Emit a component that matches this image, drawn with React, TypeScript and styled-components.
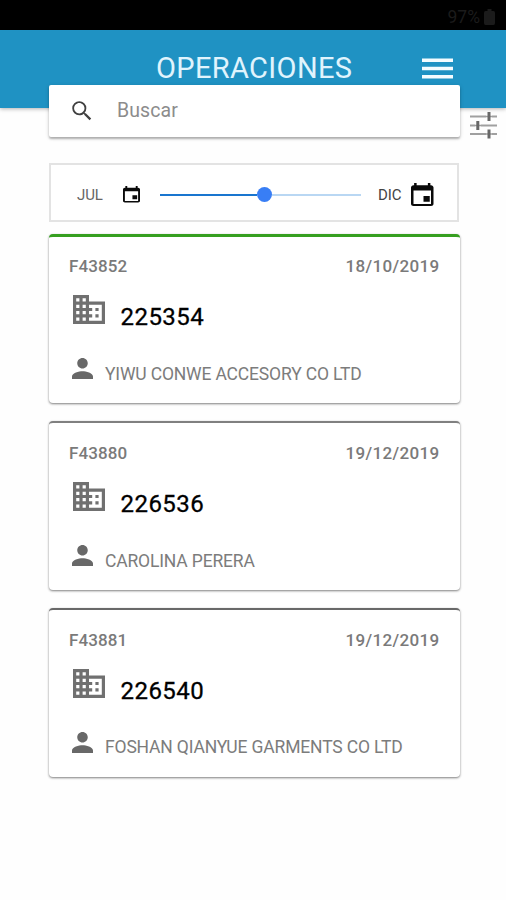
import React from 'react';
import styled, { createGlobalStyle } from 'styled-components';

const GlobalStyle = createGlobalStyle`
  * { box-sizing: border-box; }
  body { margin: 0; background: #fefefe; font-family: Roboto, sans-serif; }
`;

const Screen = styled.div`
  width: 506px;
  height: 900px;
  overflow: hidden;
  background: #fefefe;
`;

const StatusBar = styled.div`
  height: 30px;
  padding: 3px 11px 0 0;
  display: flex;
  justify-content: flex-end;
  align-items: center;
  gap: 4px;
  background: #000;
  color: #1b1b1b;
  font-size: 17.5px;
`;

const Header = styled.header`
  height: 78px;
  padding: 19.5px 53px 0 156px;
  display: flex;
  justify-content: space-between;
  align-items: flex-start;
  background: #1f92c3;
  box-shadow: 0 1px 4px rgba(0, 0, 0, 0.3);
`;

const Title = styled.h1`
  margin: 0;
  font-size: 29px;
  line-height: 36px;
  font-weight: 400;
  letter-spacing: 0.35px;
  color: #e0f4fd;
  white-space: nowrap;
`;

const MenuButton = styled.button`
  margin: 8.5px 0 0;
  padding: 0;
  border: 0;
  background: none;
  line-height: 0;
`;

const SearchRow = styled.div`
  position: relative;
  margin-top: -23px;
  padding-left: 49px;
  display: flex;
  align-items: flex-start;
  height: 52px;
`;

const SearchBox = styled.div`
  width: 410.5px;
  height: 52px;
  padding-left: 20px;
  display: flex;
  align-items: center;
  gap: 22px;
  background: #fff;
  border-radius: 2px;
  box-shadow: 0 2px 2px rgba(0, 0, 0, 0.24), 0 1px 4px rgba(0, 0, 0, 0.16);
`;

const Placeholder = styled.span`
  margin-top: -1px;
  font-size: 19.5px;
  letter-spacing: 0.1px;
  color: #8c8c8c;
`;

const FilterButton = styled.button`
  margin: 27px 0 0 10.5px;
  padding: 0;
  border: 0;
  background: none;
  line-height: 0;
`;

const Content = styled.main`
  width: 410.5px;
  margin: 26px 0 0 49px;
`;

const RangeBox = styled.section`
  width: 410px;
  height: 59px;
  padding: 4px 23px 0 26px;
  display: flex;
  align-items: center;
  border: 2px solid #e3e3e3;
  background: #fff;
`;

const Month = styled.span<{ $width: number; $soft?: boolean }>`
  width: ${(p) => p.$width}px;
  font-size: 15px;
  letter-spacing: -0.1px;
  color: ${(p) => (p.$soft ? '#666' : '#444')};
`;

const Slider = styled.div`
  width: 201px;
  height: 15px;
  margin: 0 17px 0 20px;
  display: flex;
  align-items: center;
`;

const Track = styled.div<{ $active?: boolean }>`
  width: ${(p) => (p.$active ? 97 : 89)}px;
  height: 2px;
  background: ${(p) => (p.$active ? '#1975cf' : '#b9d7f3')};
`;

const Thumb = styled.div`
  width: 15px;
  height: 15px;
  border-radius: 50%;
  background: #387ef5;
`;

const CardList = styled.div`
  margin-top: 12px;
  display: flex;
  flex-direction: column;
  gap: 17.8px;
`;

const Card = styled.article<{ $accent: string; $line: number }>`
  height: 169px;
  padding: ${(p) => 22.4 - p.$line}px 20px 0;
  border-top: ${(p) => p.$line}px solid ${(p) => p.$accent};
  border-radius: 4px;
  background: #fff;
  box-shadow: 0 1px 2px rgba(0, 0, 0, 0.34), 0 1px 3px rgba(0, 0, 0, 0.2);
`;

const CardTop = styled.div`
  height: 20px;
  display: flex;
  justify-content: space-between;
  font-size: 17px;
  line-height: 20px;
  font-weight: 500;
  letter-spacing: 0.1px;
  color: #7a7a7a;
`;

const DateText = styled.time`
  letter-spacing: 0.35px;
`;

const NumberRow = styled.div`
  height: 36px;
  margin: 19px 0 0 3.5px;
  display: flex;
  gap: 16px;
`;

const OperationNumber = styled.span`
  padding-top: 8px;
  font-size: 24px;
  line-height: 28px;
  letter-spacing: 0.45px;
  color: #000;
  -webkit-text-stroke: 0.3px #000;
`;

const ClientRow = styled.div`
  height: 27px;
  margin: 27px 0 0 3px;
  display: flex;
  gap: 12px;
`;

const ClientName = styled.span`
  padding-top: 5.5px;
  font-size: 17.5px;
  line-height: 20px;
  letter-spacing: -0.16px;
  white-space: nowrap;
  color: #7c7c7c;
`;

const Icon = styled.svg`
  display: block;
  flex: none;
`;

const BatteryIcon = () => (
  <Icon width="11" height="16" viewBox="0 0 11 16" fill="#1b1b1b">
    <path d="M3.5 0h4v2H9.5Q11 2 11 4v10q0 2-1.5 2h-8Q0 16 0 14V4q0-2 1.5-2h2z" />
  </Icon>
);

const MenuIcon = () => (
  <Icon width="31" height="21" viewBox="0 0 31 21" fill="#f4fcff">
    <path d="M0 .5h31v3.6H0zM0 8.7h31v3.6H0zM0 16.9h31v3.6H0z" />
  </Icon>
);

const SearchIcon = () => (
  <Icon width="26" height="26" viewBox="0 0 24 24" fill="#404040">
    <path d="M15.5 14h-.79l-.28-.27A6.471 6.471 0 0 0 16 9.5 6.5 6.5 0 1 0 9.5 16c1.61 0 3.09-.59 4.23-1.57l.27.28v.79l5 4.99L20.49 19l-4.99-5zm-6 0.3C7 14.3 4.7 12 4.7 9.5S7 4.7 9.5 4.7 14.3 7 14.3 9.5 12 14.3 9.5 14.3z" />
  </Icon>
);

const TuneIcon = () => (
  <Icon width="27" height="27" viewBox="0 0 27 27">
    <path d="M0 4.5h16M22 4.5h5M0 13.5h5M11 13.5h16M0 22h16M22 22h5" stroke="#a0a0a0" strokeWidth="2" />
    <path d="M16 4.5h6M5 13.5h6M16 22h6" stroke="#a0a0a0" strokeWidth="1.6" />
    <path d="M19 0v9M7.8 9v9M19 17.5v9" stroke="#686868" strokeWidth="3" />
  </Icon>
);

const CalendarIcon = ({ width, height }: { width: number; height: number }) => (
  <Icon width={width} height={height} viewBox="3 1 18 20" preserveAspectRatio="none" fill="#0a0a0a">
    <path d="M18 12.2h-5v5h5zM16.5 1v2h-9V1h-2v2H5c-1.1 0-2 .9-2 2v14c0 1.1.9 2 2 2h14c1.1 0 2-.9 2-2V5c0-1.1-.9-2-2-2h-.5V1zM19 19.2H5V7.5h14z" />
  </Icon>
);

const BuildingIcon = () => (
  <Icon width="32" height="29" viewBox="2 3 20 18" preserveAspectRatio="none" fill="#707070">
    <path d="M12 7V3H2v18h20V7H12zM6 19H4v-2h2v2zm0-4H4v-2h2v2zm0-4H4V9h2v2zm0-4H4V5h2v2zm4 12H8v-2h2v2zm0-4H8v-2h2v2zm0-4H8V9h2v2zm0-4H8V5h2v2zm10 12h-8v-2h2v-2h-2v-2h2v-2h-2V9h8v10zm-2-8h-2v2h2v-2zm0 4h-2v2h2v-2z" />
  </Icon>
);

const PersonIcon = () => (
  <Icon width="21" height="21" viewBox="4 4 16 16" fill="#686868">
    <path d="M12 12c2.21 0 4-1.79 4-4s-1.79-4-4-4-4 1.79-4 4 1.79 4 4 4zm0 2c-2.67 0-8 1.34-8 4v2h16v-2c0-2.66-5.33-4-8-4z" />
  </Icon>
);

const operations = [
  { code: 'F43852', date: '18/10/2019', number: '225354', client: 'YIWU CONWE ACCESORY CO LTD', accent: '#369f20', line: 3 },
  { code: 'F43880', date: '19/12/2019', number: '226536', client: 'CAROLINA PERERA', accent: '#808080', line: 2 },
  { code: 'F43881', date: '19/12/2019', number: '226540', client: 'FOSHAN QIANYUE GARMENTS CO LTD', accent: '#686868', line: 2 },
];

export default function App() {
  return (
    <Screen>
      <GlobalStyle />
      <StatusBar>
        97%
        <BatteryIcon />
      </StatusBar>
      <Header>
        <Title>OPERACIONES</Title>
        <MenuButton aria-label="Menú"><MenuIcon /></MenuButton>
      </Header>
      <SearchRow>
        <SearchBox>
          <SearchIcon />
          <Placeholder>Buscar</Placeholder>
        </SearchBox>
        <FilterButton aria-label="Filtros"><TuneIcon /></FilterButton>
      </SearchRow>
      <Content>
        <RangeBox>
          <Month $width={46} $soft>JUL</Month>
          <CalendarIcon width={17} height={16.5} />
          <Slider>
            <Track $active />
            <Thumb />
            <Track />
          </Slider>
          <Month $width={33}>DIC</Month>
          <CalendarIcon width={22.5} height={23} />
        </RangeBox>
        <CardList>
          {operations.map((op) => (
            <Card key={op.code} $accent={op.accent} $line={op.line}>
              <CardTop>
                <span>{op.code}</span>
                <DateText>{op.date}</DateText>
              </CardTop>
              <NumberRow>
                <BuildingIcon />
                <OperationNumber>{op.number}</OperationNumber>
              </NumberRow>
              <ClientRow>
                <PersonIcon />
                <ClientName>{op.client}</ClientName>
              </ClientRow>
            </Card>
          ))}
        </CardList>
      </Content>
    </Screen>
  );
}
